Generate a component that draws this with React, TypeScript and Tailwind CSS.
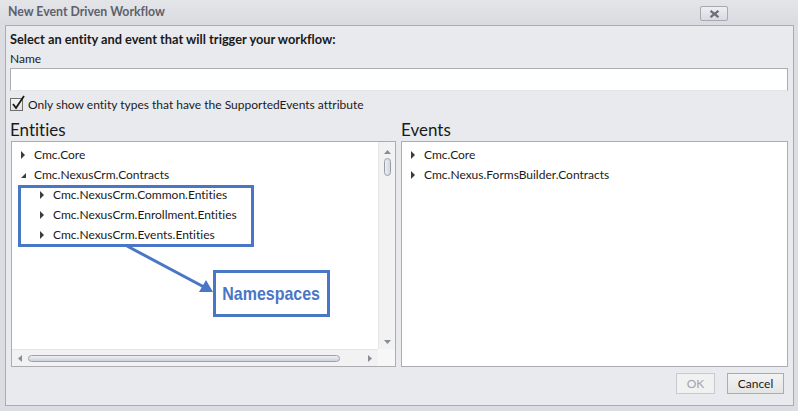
import React from 'react';

interface TreeItem {
  label: string;
  level: number;
  expanded?: boolean;
}

const entities: TreeItem[] = [
  { label: 'Cmc.Core', level: 0 },
  { label: 'Cmc.NexusCrm.Contracts', level: 0, expanded: true },
  { label: 'Cmc.NexusCrm.Common.Entities', level: 1 },
  { label: 'Cmc.NexusCrm.Enrollment.Entities', level: 1 },
  { label: 'Cmc.NexusCrm.Events.Entities', level: 1 },
];

const events: TreeItem[] = [
  { label: 'Cmc.Core', level: 0 },
  { label: 'Cmc.Nexus.FormsBuilder.Contracts', level: 0 },
];

const Arrow: React.FC<{ expanded?: boolean }> = ({ expanded }) =>
  expanded ? (
    <svg width="6" height="6" viewBox="0 0 6 6" className="mt-[2px]">
      <polygon points="5,0 5,5 0,5" fill="#3c3c3c" />
    </svg>
  ) : (
    <svg width="5" height="8" viewBox="0 0 5 8">
      <polygon points="0,0 4,4 0,8" fill="#3c3c3c" />
    </svg>
  );

const Tree: React.FC<{ items: TreeItem[] }> = ({ items }) => (
  <div className="pt-[3px]">
    {items.map((item, i) => (
      <div
        key={i}
        className={`flex items-center h-[20px] ${item.level === 1 ? 'pl-[28px]' : 'pl-[9px]'}`}
      >
        <div className="w-[13px] flex items-center">
          <Arrow expanded={item.expanded} />
        </div>
        <span className="text-[12px] text-[#1a1a1a] whitespace-nowrap">{item.label}</span>
      </div>
    ))}
  </div>
);

const App: React.FC = () => {
  return (
    <div
      className="relative w-[798px] h-[411px] overflow-hidden bg-[#dcdde2] [font-variant-ligatures:none]"
      style={{ fontFamily: 'Lato, "Noto Sans", sans-serif' }}
    >
      {/* Title bar */}
      <div className="h-[25px] flex items-center justify-between pl-[8px] pr-[70px] bg-gradient-to-b from-[#e4e5e9] to-[#dadbe0]">
        <span className="text-[12.3px] font-bold text-[#5d616c]">New Event Driven Workflow</span>
        <div className="w-[28px] h-[15px] mt-[2px] rounded-[2px] border border-[#a7a9b0] bg-gradient-to-b from-[#eeeff2] to-[#d9dadf] flex items-center justify-center">
          <svg width="11" height="8" viewBox="0 0 11 8">
            <path d="M1.5 0.8 L9.5 7.2 M9.5 0.8 L1.5 7.2" stroke="#6c6f79" strokeWidth="2.2" />
          </svg>
        </div>
      </div>

      {/* Panel */}
      <div className="ml-[5px] w-[789px] h-[381px] border border-[#aaacb3] bg-[#e9eaee] flex flex-col">
        <div className="pl-[4px] pt-[6px] h-[21px] flex items-center text-[12.8px] font-bold text-[#1a1a1a] leading-none">
          Select an entity and event that will trigger your workflow:
        </div>
        <div className="pl-[4px] h-[20px] flex items-end text-[12px] text-[#1a1a1a] leading-none pb-[2px]">Name</div>
        <div className="ml-[4px] mr-[5px] h-[23px] mt-[1px] bg-white border border-[#abadb3] border-b-[#e3e4e8]" />
        <div className="flex items-center pl-[4px] h-[26px] pt-[1px]">
          <div className="relative w-[13px] h-[13px] border border-[#707070] bg-gradient-to-b from-[#f4f4f4] to-[#e2e2e2]">
            <svg width="15" height="16" viewBox="0 0 15 16" className="absolute left-[0px] top-[-4px]">
              <path d="M2 9 L5 13 L13 1" stroke="#1a1a1a" strokeWidth="1.8" fill="none" />
            </svg>
          </div>
          <span className="ml-[5px] text-[12px] text-[#1a1a1a]">
            Only show entity types that have the SupportedEvents attribute
          </span>
        </div>

        {/* Entities / Events */}
        <div className="flex pl-[4px] pr-[5px] gap-[5px]">
          <div className="flex flex-col w-[386px]">
            <div className="h-[24px] flex items-center text-[17px] text-[#1a1a1a] leading-none">Entities</div>
            <div className="ml-[1px] h-[226px] border border-[#abadb3] bg-white flex flex-col">
              <div className="flex flex-1 min-h-0">
                <div className="flex-1 overflow-hidden">
                  <Tree items={entities} />
                </div>
                {/* vertical scrollbar */}
                <div className="w-[17px] bg-[#f2f2f3] border-l border-[#e6e6e8] flex flex-col items-center">
                  <svg width="7" height="4" viewBox="0 0 7 4" className="mt-[8px]">
                    <polygon points="0,4 3.5,0 7,4" fill="#8a8d96" />
                  </svg>
                  <div className="mt-[4px] w-[7px] h-[18px] rounded-full border border-[#9a9da8] bg-gradient-to-r from-[#eceef3] to-[#d4d7df]" />
                  <div className="flex-1" />
                  <svg width="7" height="4" viewBox="0 0 7 4" className="mb-[5px]">
                    <polygon points="0,0 3.5,4 7,0" fill="#8a8d96" />
                  </svg>
                </div>
              </div>
              {/* horizontal scrollbar */}
              <div className="h-[17px] flex">
                <div className="flex-1 bg-[#f2f2f3] border-t border-[#e6e6e8] flex items-center px-[6px]">
                  <svg width="4" height="7" viewBox="0 0 4 7">
                    <polygon points="4,0 0,3.5 4,7" fill="#8a8d96" />
                  </svg>
                  <div className="ml-[6px] w-[312px] h-[7px] rounded-full border border-[#9ea2ad] bg-gradient-to-b from-[#eef0f5] to-[#cdd1db]" />
                  <div className="flex-1" />
                  <svg width="4" height="7" viewBox="0 0 4 7">
                    <polygon points="0,0 4,3.5 0,7" fill="#8a8d96" />
                  </svg>
                </div>
                <div className="w-[17px] bg-[#f7f7f8]" />
              </div>
            </div>
          </div>
          <div className="flex flex-col flex-1">
            <div className="h-[24px] flex items-center text-[17px] text-[#1a1a1a] leading-none">Events</div>
            <div className="h-[226px] border border-[#abadb3] bg-white">
              <Tree items={events} />
            </div>
          </div>
        </div>

        {/* Buttons */}
        <div className="flex justify-end gap-[12px] pr-[9px] mt-[6px]">
          <button className="w-[39px] h-[21px] border border-[#c9cacf] bg-[#f1f1f2] text-[12px] text-[#a3a3a6]">
            OK
          </button>
          <button className="w-[57px] h-[21px] border border-[#acacac] bg-gradient-to-b from-[#f3f3f3] to-[#e4e4e4] text-[12px] text-[#1a1a1a]">
            Cancel
          </button>
        </div>
      </div>

      {/* Annotation: highlight around namespaces */}
      <div className="absolute left-[18px] top-[185px] w-[236px] h-[62px] border-[3px] border-[#4a76c6]" />
      <svg className="absolute left-0 top-0" width="798" height="411" viewBox="0 0 798 411">
        <line x1="127" y1="246" x2="204" y2="287" stroke="#4a76c6" strokeWidth="3" />
        <polygon points="213,292 199,292 206,280" fill="#4a76c6" />
      </svg>
      <div className="absolute left-[213px] top-[270px] w-[117px] h-[47px] border-[3px] border-[#4a76c6] bg-white flex items-center justify-center">
        <span
          className="text-[19px] font-bold text-[#4a76c6] scale-x-[0.84] leading-none"
          style={{ fontFamily: '"Liberation Sans", Arial, sans-serif' }}
        >
          Namespaces
        </span>
      </div>
    </div>
  );
};

export default App;
